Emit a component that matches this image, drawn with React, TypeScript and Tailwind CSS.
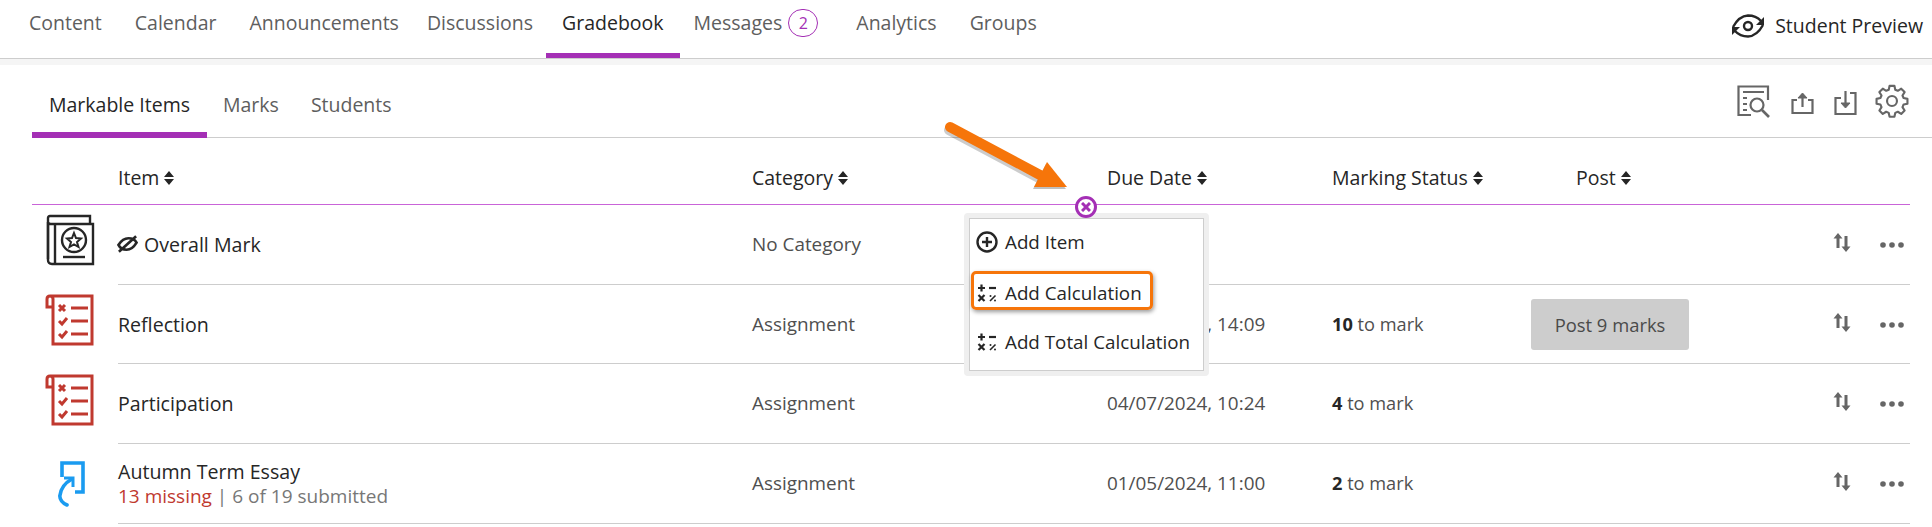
import React from 'react';

const mainTabs = [
  { label: 'Content', shift: '' },
  { label: 'Calendar', shift: 'ml-px' },
  { label: 'Announcements', shift: 'ml-px' },
  { label: 'Discussions', shift: '-ml-1' },
  { label: 'Gradebook', shift: '-ml-[3px]' },
  { label: 'Messages', shift: '-ml-[2px]' },
  { label: 'Analytics', shift: 'ml-[6px]' },
  { label: 'Groups', shift: 'ml-px' },
];

const Sort = () => (
  <svg width="10" height="16" viewBox="0 0 10 16" className="ml-[5px] shrink-0">
    <path d="M5 1 L10 7 H0 Z M0 9 H10 L5 15 Z" fill="#262626" />
  </svg>
);

const HeaderCell = ({ label, className }: { label: string; className: string }) => (
  <div className={`flex items-center ${className}`}>
    <span>{label}</span>
    <Sort />
  </div>
);

const BookIcon = () => (
  <svg width="50" height="52" viewBox="0 0 50 52" fill="none" stroke="#262626" strokeWidth="2.4">
    <path d="M2 45 V4 Q2 2 4 2 H44 V9" />
    <path d="M2 8 Q2 10 5 10 H47 V50 H6 Q2 50 2 46 Z" />
    <path d="M9 10 V50" />
    <circle cx="28" cy="26" r="12" />
    <path d="M28 19 L30 24 L35 24.500 L31 28 L32.500 33 L28 30.500 L23.500 33 L25 28 L21 24.500 L26 24 Z" strokeWidth="2" />
    <path d="M17 43 H39" strokeWidth="2.400" />
  </svg>
);

const ChecklistIcon = () => (
  <svg width="50" height="52" viewBox="0 0 50 52" fill="none" stroke="#c0392f" strokeWidth="3">
    <path d="M8 13 H2 V5 Q2 2 5 2 H47 V50 H8 V5 Q8 2 5 2" />
    <path d="M14 11 L20 17 M20 11 L14 17" />
    <path d="M26 14 H43 M26 27 H43 M26 40 H43" />
    <path d="M14 27 L17 30 L22 24 M14 40 L17 43 L22 37" />
  </svg>
);

const AssignmentIcon = () => (
  <svg width="30" height="46" viewBox="0 0 30 46" fill="none" stroke="#1a9bf0" strokeWidth="3.600">
    <path d="M4 16 V2 H25 V31 H17" />
    <path d="M9 44 Q2 41 1.800 35 Q3 24 14 18" strokeLinecap="round" />
    <path d="M6 17 H15 V26" strokeWidth="3" />
  </svg>
);

const EyeOff = () => (
  <svg width="21" height="20" viewBox="0 0 22 20" fill="none" stroke="#262626" strokeWidth="2.800" className="mr-[6px] -ml-px">
    <path d="M1.500 11 Q6 4 12 4 Q18 4 20.500 8.500 Q16 16 10 16 Q4 16 1.500 11 Z" />
    <path d="M2 18 L20 2" />
  </svg>
);

const MoveIcon = () => (
  <svg width="18" height="21" viewBox="0 0 18 21" fill="#666" className="mb-[4px]">
    <path d="M5 1 L9.500 6.500 H6.500 V16 H3.500 V6.500 H0.500 Z" />
    <path d="M13 20 L17.500 14.500 H14.500 V4 H11.500 V14.500 H8.500 Z" />
  </svg>
);

const Dots = () => (
  <svg width="24" height="6" viewBox="0 0 24 6" fill="#666">
    <circle cx="3" cy="3" r="2.800" />
    <circle cx="12" cy="3" r="2.800" />
    <circle cx="21" cy="3" r="2.800" />
  </svg>
);

const CalcIcon = () => (
  <svg width="20" height="20" viewBox="0 0 20 20" fill="none" stroke="#262626" strokeWidth="2.200" className="shrink-0">
    <path d="M1 5 H8 M4.500 1.500 V8.500" />
    <path d="M12 5 H19" />
    <path d="M1.500 12 L7.500 18 M7.500 12 L1.500 18" />
    <path d="M13 18 L18.500 12.500" strokeWidth="1.600" />
    <circle cx="13.500" cy="13" r="1" fill="#262626" stroke="none" />
    <circle cx="18" cy="17.500" r="1" fill="#262626" stroke="none" />
  </svg>
);

const Row = ({
  icon,
  title,
  category,
  due,
  count,
  post,
  height,
}: {
  icon: React.ReactNode;
  title: React.ReactNode;
  category: string;
  due?: string;
  count?: string;
  post?: boolean;
  height: string;
}) => (
  <div className="flex">
    <div className="w-[86px] shrink-0 flex items-center pl-[14px]">{icon}</div>
    <div className={`flex flex-1 items-center border-b border-[#cdcdcd] ${height}`}>
      <div className="w-[634px] shrink-0 text-[19.600px] text-[#262626]">{title}</div>
      <div className="w-[355px] shrink-0 text-[18.900px] text-[#4f4f4f]">{category}</div>
      <div className="w-[225px] shrink-0 text-[18.900px] text-[#4f4f4f]">{due}</div>
      <div className="w-[199px] shrink-0 text-[18.200px] text-[#4f4f4f]">
        {count && <b className="font-bold text-[#262626]">{count}</b>}
        {count && ' to mark'}
      </div>
      <div className="w-[302px] shrink-0">
        {post && (
          <div className="w-[158px] h-[51px] rounded-[3px] bg-[#cdcdcd] flex items-center justify-center text-[18.400px] text-[#4a4a4a]">
            Post 9 marks
          </div>
        )}
      </div>
      <div className="flex items-center">
        <MoveIcon />
        <div className="w-[29px]" />
        <Dots />
      </div>
    </div>
  </div>
);

export default function App() {
  return (
    <div className="relative w-[1932px] h-[527px] bg-white overflow-hidden text-[19.500px] font-['Open_Sans',sans-serif]">
      {/* course nav */}
      <div className="flex items-stretch justify-between h-[59px] border-b border-[#cdcdcd] pl-[13px] pr-[9px]">
        <div className="flex">
          {mainTabs.map((t) => (
            <div
              key={t.label}
              className={`flex items-center px-4 h-[58px] ${t.shift} ${
                t.label === 'Gradebook'
                  ? 'text-[#262626] font-medium border-b-[5px] border-[#a42fb5] pb-[7px]'
                  : 'text-[#5e5e5e] pb-[12px]'
              }`}
            >
              {t.label}
              {t.label === 'Messages' && (
                <span className="ml-[6px] w-[30px] h-[28px] rounded-full border border-[#a42fb5] flex items-center justify-center text-[16px] text-[#a42fb5]">
                  2
                </span>
              )}
            </div>
          ))}
        </div>
        <div className="flex items-center pb-[6px] text-[#262626]">
          <svg width="34" height="26" viewBox="0 0 34 26" fill="none" stroke="#262626" strokeWidth="2.400" className="mr-[10px]">
            <path d="M2 14 Q8 3 17 2.500 Q25 2.500 30 8" />
            <path d="M32 12 Q26 23 17 23.500 Q9 23.500 4 18" />
            <path d="M33 4 V12 H25 Z" strokeWidth="0" fill="#262626" />
            <path d="M1 22 V14 H9 Z" strokeWidth="0" fill="#262626" />
            <circle cx="17" cy="13" r="4" />
          </svg>
          Student Preview
        </div>
      </div>
      <div className="h-[6px] bg-[#f5f5f5]" />

      {/* sub tabs */}
      <div className="ml-8 h-[73px] flex justify-between border-b border-[#cdcdcd]">
        <div className="flex">
          <div className="flex items-center px-[17px] h-[73px] pt-[12px] border-b-[6px] border-[#a42fb5] text-[#262626]">Markable Items</div>
          <div className="flex items-center px-4 h-[72px] pt-[8px] text-[#5e5e5e]">Marks</div>
          <div className="flex items-center px-4 h-[72px] pt-[8px] text-[#5e5e5e]">Students</div>
        </div>
        <div className="flex items-center pr-[23px]">
          <svg width="34" height="33" viewBox="0 0 34 33" fill="none" stroke="#666" strokeWidth="2.200">
            <path d="M14 30 H1.500 V1.500 H31 V15" />
            <path d="M6 7 H27 M6 13 H10 M6 19 H10 M6 25 H10" />
            <circle cx="20" cy="20" r="6.500" />
            <path d="M25 25 L32 32" strokeWidth="2.600" />
          </svg>
          <svg width="23" height="24" viewBox="0 0 23 24" fill="none" stroke="#666" strokeWidth="2.200" className="ml-[20px] mt-[4px]">
            <path d="M6 9 H1.500 V22 H21.500 V9 H17" />
            <path d="M11.500 16 V3" />
            <path d="M7 7 L11.500 2 L16 7 Z" fill="#666" strokeWidth="1" />
          </svg>
          <svg width="23" height="26" viewBox="0 0 23 26" fill="none" stroke="#666" strokeWidth="2.200" className="ml-[20px] mt-[4px]">
            <path d="M7 8 H1.500 V24 H21.500 V3 H16" />
            <path d="M11.500 1 V15" />
            <path d="M7 13 L11.500 18 L16 13 Z" fill="#666" strokeWidth="1" />
          </svg>
          <svg width="34" height="34" viewBox="0 0 24 24" fill="none" stroke="#666" strokeWidth="1.500" strokeLinejoin="round" className="ml-[18px]">
            <path d="M10.300 2.500 h3.400 l.6 2.700 1.800.8 2.400-1.500 2.400 2.400-1.500 2.400.8 1.800 2.700.6 v3.400 l-2.700.6-.8 1.800 1.500 2.400-2.400 2.400-2.400-1.500-1.800.8-.6 2.700 h-3.400 l-.6-2.700-1.800-.8-2.400 1.500-2.400-2.400 1.500-2.400-.8-1.800-2.700-.6 v-3.400 l2.700-.6.8-1.800-1.500-2.400 2.400-2.400 2.400 1.500 1.800-.8 z" transform="translate(0 -1.200)" />
            <circle cx="12" cy="12" r="3.500" />
          </svg>
        </div>
      </div>

      {/* table head */}
      <div className="ml-8 mr-[22px] h-[67px] pt-[14px] flex items-center border-b border-[#c964d8] pl-[86px] text-[#262626]">
        <HeaderCell label="Item" className="w-[634px]" />
        <HeaderCell label="Category" className="w-[355px]" />
        <HeaderCell label="Due Date" className="w-[225px]" />
        <HeaderCell label="Marking Status" className="w-[244px]" />
        <HeaderCell label="Post" className="w-[100px]" />
      </div>

      {/* rows */}
      <div className="ml-8 mr-[22px]">
        <Row
          height="h-[80px]"
          icon={
            <div className="pb-[10px]">
              <BookIcon />
            </div>
          }
          title={
            <div className="flex items-center">
              <EyeOff />
              Overall Mark
            </div>
          }
          category="No Category"
        />
        <Row
          height="h-[79px] pt-px"
          icon={
            <div className="pb-[9px] -ml-px">
              <ChecklistIcon />
            </div>
          }
          title="Reflection"
          category="Assignment"
          due="05/07/2024, 14:09"
          count="10"
          post
        />
        <Row
          height="h-[80px]"
          icon={
            <div className="pb-[9px] -ml-px">
              <ChecklistIcon />
            </div>
          }
          title="Participation"
          category="Assignment"
          due="04/07/2024, 10:24"
          count="4"
        />
        <Row
          height="h-[80px]"
          icon={
            <div className="pl-[12px]">
              <AssignmentIcon />
            </div>
          }
          title={
            <div className="leading-[25px]">
              <div>Autumn Term Essay</div>
              <div className="text-[19px] text-[#777]">
                <span className="text-[#c0392f]">13 missing</span> | 6 of 19 submitted
              </div>
            </div>
          }
          category="Assignment"
          due="01/05/2024, 11:00"
          count="2"
        />
      </div>

      {/* add menu */}
      <div className="absolute left-[964px] top-[213px] w-[245px] h-[163px] rounded-[4px] border-[5px] border-[#efefef] bg-white text-[18.800px] text-[#262626]">
        <div className="h-full border border-[#cdcdcd] bg-white relative">
          <div className="absolute left-[6px] top-[9px] flex items-center">
            <svg width="22" height="22" viewBox="0 0 22 22" fill="none" stroke="#262626" strokeWidth="2.400" className="mr-[7px]">
              <circle cx="11" cy="11" r="9.500" />
              <path d="M11 6 V16 M6 11 H16" />
            </svg>
            Add Item
          </div>
          <div className="absolute left-[7px] top-[60px] flex items-center">
            <CalcIcon />
            <span className="ml-[8px]">Add Calculation</span>
          </div>
          <div className="absolute left-[7px] top-[109px] flex items-center">
            <CalcIcon />
            <span className="ml-[8px]">Add Total Calculation</span>
          </div>
        </div>
      </div>

      {/* add-menu trigger */}
      <div className="absolute left-[1075px] top-[196px] w-[22px] h-[22px] rounded-full border-[3px] border-[#a42fb5] bg-white flex items-center justify-center">
        <svg width="10" height="10" viewBox="0 0 10 10" stroke="#a42fb5" strokeWidth="3">
          <path d="M1 1 L9 9 M9 1 L1 9" />
        </svg>
      </div>

      {/* annotation highlight */}
      <div className="absolute left-[971px] top-[271px] w-[182px] h-[39px] rounded-[5px] border-[3px] border-[#f6750a] shadow-[1px_2px_4px_rgba(0,0,0,0.4)]" />

      {/* annotation arrow */}
      <svg width="140" height="90" viewBox="0 0 140 90" className="absolute left-[940px] top-[115px]">
        <path d="M10 12 L100 60" stroke="rgba(0,0,0,0.2)" strokeWidth="10" strokeLinecap="round" transform="translate(-1 3)" />
        <path d="M107 47 L127 72 L94 72 Z" fill="rgba(0,0,0,0.25)" transform="translate(-1 2)" />
        <path d="M10 12 L100 60" stroke="#f6750a" strokeWidth="10" strokeLinecap="round" />
        <path d="M107 47 L127 72 L94 72 Z" fill="#f6750a" />
      </svg>
    </div>
  );
}
